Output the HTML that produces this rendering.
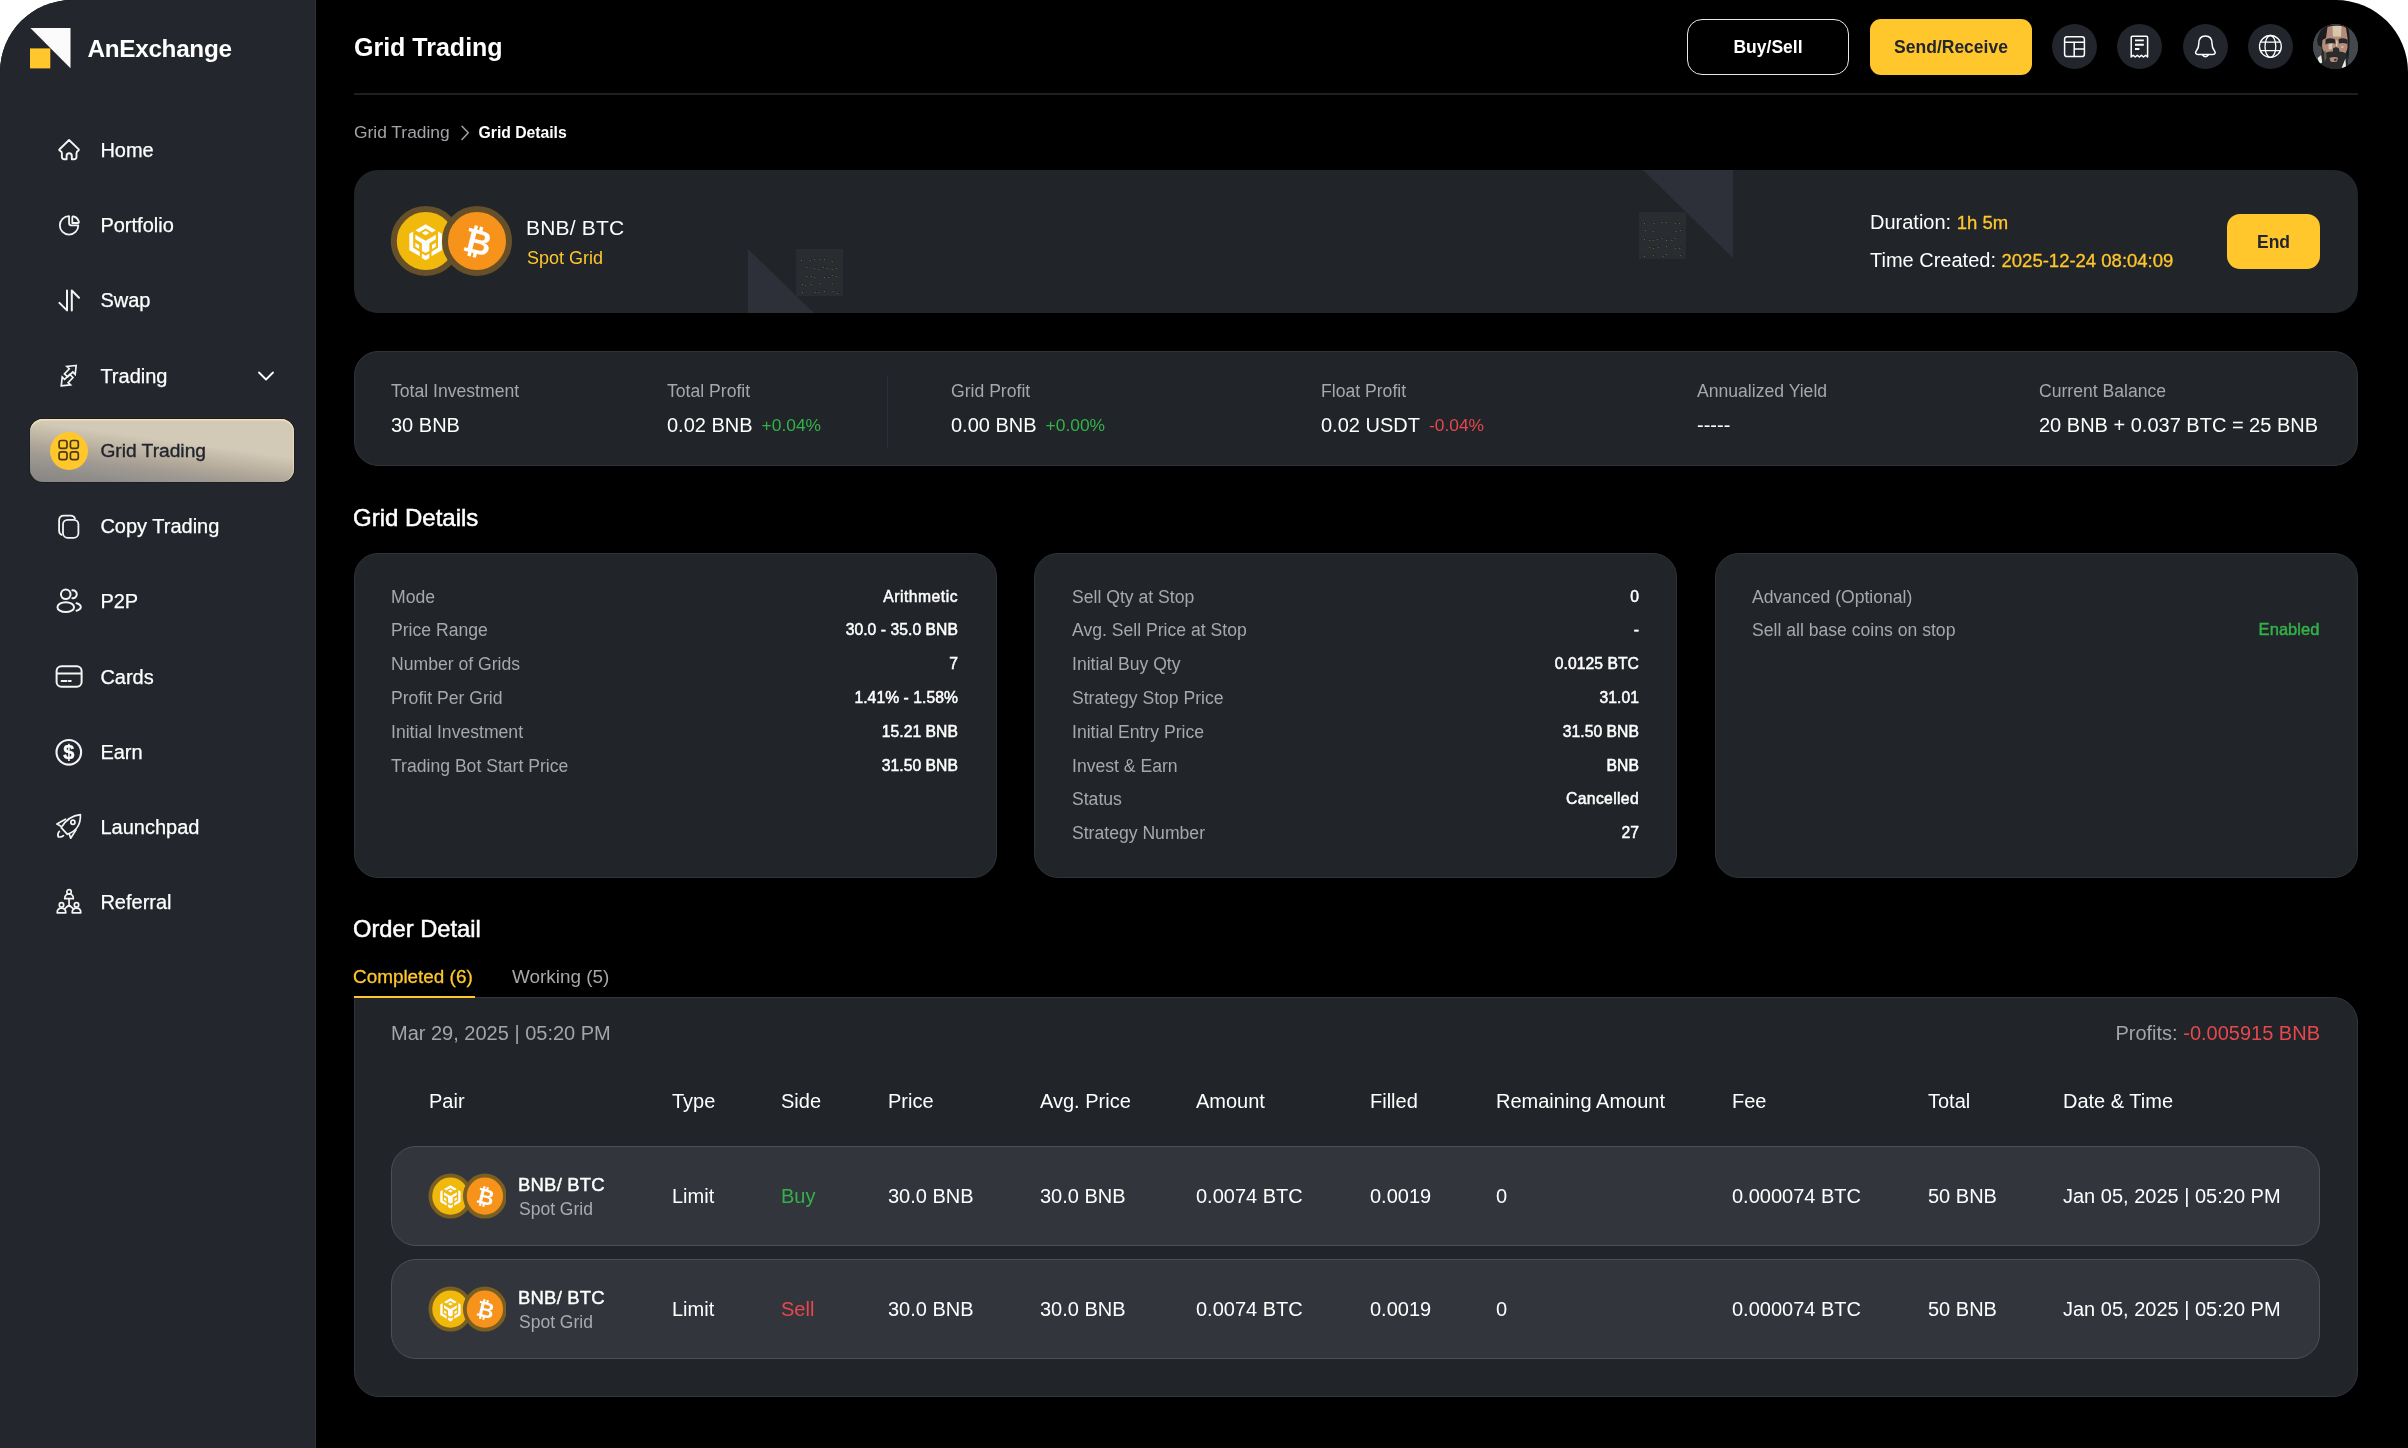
<!DOCTYPE html>
<html lang="en">
<head>
<meta charset="utf-8">
<title>Grid Trading - AnExchange</title>
<style>
*{box-sizing:border-box;margin:0;padding:0}
html,body{width:2408px;height:1448px;background:#fff;overflow:hidden}
body{font-family:"Liberation Sans",Arial,sans-serif;color:#fff;-webkit-font-smoothing:antialiased}
#app{will-change:transform;position:absolute;left:0;top:0;width:2408px;height:1448px;background:#000;border-radius:72px 72px 0 0;overflow:hidden}
.abs{position:absolute}
.t{position:absolute;white-space:nowrap;line-height:1}
/* sidebar */
#side{position:absolute;left:0;top:0;width:316px;height:1448px;background:#23262d;border-right:1px solid #2d3037}
.nav{position:absolute;left:100px;font-size:20px;line-height:24px;color:#fff;white-space:nowrap;margin-top:-0.6px;margin-left:0.4px;-webkit-text-stroke:0.25px #fff}
.ico{position:absolute;left:54px;width:30px;height:30px}
.ico svg{width:30px;height:30px;display:block;fill:none;stroke:#f4f4f4;stroke-width:1.8;stroke-linecap:round;stroke-linejoin:round}
#active{position:absolute;left:30px;top:419px;width:263.5px;height:63.2px;border-radius:13px;background:linear-gradient(188deg,#d3c9b7 0%,#d3c9b7 39%,#c7bdab 47%,#bcb2a1 55%,#b0a799 62%,#a09a93 72%,#918e8a 86%,#868482 100%);box-shadow:inset 0 1.5px 0 #f3e1b8,inset -1px 0 0 rgba(243,225,184,.6),0 0 0 1px #1c1e24}
/* header */
.btn{position:absolute;display:flex;align-items:center;justify-content:center;font-weight:700;font-size:17.5px;padding-top:1px}
.cir{position:absolute;top:24.3px;width:45px;height:45px;border-radius:50%;background:#22252c}
.cir svg{position:absolute;left:0;top:0;width:45px;height:45px;fill:none;stroke:#fff;stroke-width:1.5;stroke-linecap:round;stroke-linejoin:round}
/* cards */
.card{position:absolute;background:#212429;border-radius:24px}
.lbl{color:#a7a8aa}
.dl{font-size:17.6px;margin-top:1.5px}
.dv{font-size:15.7px;font-weight:400;letter-spacing:0.05px;margin-top:0.5px;-webkit-text-stroke:0.5px #fff}
.th{font-size:20px}
.gr{color:#33b249}
.rd{color:#e5484d}
.yl{color:#ffc72c}
.yv{font-size:18.5px;-webkit-text-stroke:0.3px #ffc72c}
</style>
</head>
<body>
<div id="app">

<!-- ============ SIDEBAR ============ -->
<div id="side">
  <svg class="abs" style="left:30px;top:28px" width="42" height="42" viewBox="0 0 42 42">
    <polygon points="0.4,0 40.5,0 40.5,40.2" fill="#fbfbfb"/>
    <rect x="0" y="20.4" width="20.3" height="20" fill="#ffc72c"/>
  </svg>
  <div class="t" style="left:87.5px;top:37px;font-size:24.3px;font-weight:700;letter-spacing:-0.3px">AnExchange</div>

  <div id="active"></div>
  <!-- Home -->
  <div class="ico" style="top:135px"><svg viewBox="0 0 30 30" style="stroke-width:1.9"><path d="M15.05 5 L5.6 14.2 Q4.8 15 5.9 15.6 Q7.9 16.6 7.9 18.2 V21.8 Q7.9 24.3 10.4 24.3 H12.6 V20.8 Q12.6 18.2 15.2 18.2 Q17.8 18.2 17.8 20.8 V24.3 H20 Q22.5 24.3 22.5 21.8 V18.2 Q22.5 16.6 24.3 15.6 Q25.3 15 24.5 14.2 Z"/></svg></div>
  <div class="nav" style="top:139px">Home</div>
  <!-- Portfolio -->
  <div class="ico" style="top:210px"><svg viewBox="0 0 30 30" style="stroke-width:1.8"><path d="M15.06 6.2 A9.2 9.2 0 1 0 24.26 15.4 H17.6 Q15.06 15.4 15.06 12.9 Z"/><path d="M18.3 13 V7.3 Q18.3 6 19.6 6.4 Q23.6 7.6 24.8 11.6 Q25.2 13 23.9 13 Z"/></svg></div>
  <div class="nav" style="top:214px">Portfolio</div>
  <!-- Swap -->
  <div class="ico" style="top:285px"><svg viewBox="0 0 30 30" style="stroke-width:2"><path d="M13 5.5 V25.4 L5.4 17.9"/><path d="M17.8 25.4 V5.5 L25 12.7"/></svg></div>
  <div class="nav" style="top:289px">Swap</div>
  <!-- Trading -->
  <div class="ico" style="top:361px"><svg viewBox="0 0 30 30" style="stroke-width:1.8;stroke-linejoin:miter"><g transform="translate(14.7,14.7) scale(0.93) translate(-14.5,-14.45)"><path d="M22.5 3.5 L12.5 4.5 L15.1 7 L9.9 12.5 L13.4 15.8 L18.9 10.5 L21.5 13 Z"/><path d="M6.5 25.4 L16.5 24.4 L13.9 21.9 L19.1 16.4 L15.6 13.1 L10.1 18.4 L7.5 15.9 Z"/></g></svg></div>
  <div class="nav" style="top:365px">Trading</div>
  <svg class="abs" style="left:255px;top:366px" width="22" height="20" viewBox="0 0 22 20"><path d="M4 6.5 L11 13.5 L18 6.5" fill="none" stroke="#fff" stroke-width="1.8" stroke-linecap="round" stroke-linejoin="round"/></svg>
  <!-- Grid Trading (active) -->
  <div class="abs" style="left:50px;top:432px;width:38px;height:38px;border-radius:50%;background:#ffc72c"></div>
  <div class="ico" style="top:436px"><svg viewBox="0 0 30 30" style="stroke:#4a3a12;stroke-width:1.7"><rect x="5.1" y="4.5" width="7.9" height="7.9" rx="2.2"/><rect x="16.4" y="4.5" width="7.9" height="7.9" rx="2.2"/><rect x="5.1" y="15.8" width="7.9" height="7.9" rx="2.2"/><rect x="16.4" y="15.8" width="7.9" height="7.9" rx="2.2"/></svg></div>
  <div class="nav" style="top:440px;color:#20242f;left:100px;font-size:19.2px;-webkit-text-stroke:0.35px #20242f">Grid Trading</div>
  <!-- Copy Trading -->
  <div class="ico" style="top:511px"><svg viewBox="0 0 30 30" style="stroke-width:1.8"><rect x="9" y="8.8" width="15.4" height="18" rx="4.6"/><path d="M21 7.6 Q20 4.7 16.8 4.7 H10 Q5.1 4.7 5.1 9.6 V19.8 Q5.1 22.8 7.6 23.8"/></svg></div>
  <div class="nav" style="top:515px">Copy Trading</div>
  <!-- P2P -->
  <div class="ico" style="top:586px"><svg viewBox="0 0 30 30" style="stroke-width:2"><circle cx="11.75" cy="8.3" r="4.8"/><ellipse cx="11.75" cy="21.2" rx="8.3" ry="4.9"/><path d="M18.4 4.35 A3.97 3.97 0 1 1 18.4 12.25"/><path d="M22.5 17.3 Q26.8 18.6 26.8 21 Q26.8 23.4 22.5 24.7"/></svg></div>
  <div class="nav" style="top:590px">P2P</div>
  <!-- Cards -->
  <div class="ico" style="top:662px"><svg viewBox="0 0 30 30" style="stroke-width:2"><rect x="2.6" y="4.2" width="25" height="20.6" rx="4.8"/><path d="M3 11.6 H27.2"/><path d="M7.6 19 H12.6 M14.8 19 H16.8"/></svg></div>
  <div class="nav" style="top:666px">Cards</div>
  <!-- Earn -->
  <div class="ico" style="top:737px"><svg viewBox="0 0 30 30" style="stroke-width:2.1"><circle cx="14.8" cy="15.3" r="12.3"/><text x="14.8" y="22.3" text-anchor="middle" font-family="Liberation Sans, Arial, sans-serif" font-weight="700" font-size="20" fill="#fff" stroke="#fff" stroke-width="0.4">$</text></svg></div>
  <div class="nav" style="top:741px">Earn</div>
  <!-- Launchpad -->
  <div class="ico" style="top:812px"><svg viewBox="0 0 30 30" style="stroke-width:1.7"><path d="M26.4 2.6 Q14.5 3.6 7.2 15.6 L13.4 22.3 Q27 17.5 26.4 2.6 Z"/><circle cx="18.9" cy="10.2" r="2.1"/><path d="M11.5 7.2 L2.9 12.1 L7 14.3"/><path d="M22 17.9 L16.7 26.2 L15.1 21.5"/><path d="M5.4 19.3 Q3 22 4.3 24.8 Q7.5 25.5 9.5 23.7"/></svg></div>
  <div class="nav" style="top:816px">Launchpad</div>
  <!-- Referral -->
  <div class="ico" style="top:887px"><svg viewBox="0 0 30 30" style="stroke-width:1.7"><circle cx="15.05" cy="4.9" r="2.2"/><path d="M10.75 11.7 Q10.75 6.999999999999999 15.05 6.999999999999999 Q19.35 6.999999999999999 19.35 11.7 Z"/><circle cx="7.5" cy="17.9" r="2.2"/><path d="M3.2 25.8 Q3.2 21.1 7.5 21.1 Q11.8 21.1 11.8 25.8 Z"/><circle cx="22.5" cy="17.9" r="2.2"/><path d="M18.2 25.8 Q18.2 21.1 22.5 21.1 Q26.8 21.1 26.8 25.8 Z"/><path d="M15.05 11.9 V18 M15.05 18 L10.9 21.7 M15.05 18 L19.2 21.7"/></svg></div>
  <div class="nav" style="top:891px">Referral</div>
</div>

<!-- ============ HEADER ============ -->
<div class="t" style="left:354px;top:34.7px;font-size:25px;font-weight:700">Grid Trading</div>
<div class="btn" style="left:1687px;top:19px;width:162px;height:56px;border:1.5px solid #e8e8e8;border-radius:15px;color:#fff">Buy/Sell</div>
<div class="btn" style="left:1870px;top:19px;width:162px;height:56px;background:#ffc72c;border-radius:11px;color:#23262e">Send/Receive</div>
<div class="cir" style="left:2052px"><svg viewBox="0 0 45 45"><rect x="12.6" y="12.7" width="19.8" height="19.8" rx="2.6"/><path d="M12.6 18.2 H32.4 M22.2 18.2 V32.5 M22.2 25 H32.4"/></svg></div>
<div class="cir" style="left:2117.3px"><svg viewBox="0 0 45 45"><path d="M14.2 33 V13.4 Q14.2 12.2 15.4 12.2 H29.4 Q30.6 12.2 30.6 13.4 V33 L28.6 31.2 L26.5 33 L24.4 31.2 L22.4 33 L20.3 31.2 L18.2 33 L16.2 31.2 Z"/><path d="M18 16.4 H26.8 M18 20.8 H26.8 M18 25 H22.4" stroke-width="1.9" stroke-linecap="butt"/></svg></div>
<div class="cir" style="left:2182.5px"><svg viewBox="0 0 45 45"><path d="M22.4 12 C17.6 12 15.8 15.6 15.8 19.6 C15.8 23.4 15 25 13.4 26.8 C11.8 28.6 12.6 30.4 15 30.4 H29.8 C32.2 30.4 33 28.6 31.4 26.8 C29.8 25 29 23.4 29 19.6 C29 15.6 27.2 12 22.4 12 Z"/><path d="M19.4 30.8 Q22.4 34.6 25.4 30.8"/></svg></div>
<div class="cir" style="left:2248px"><svg viewBox="0 0 45 45" style="stroke-width:1.3"><circle cx="22.4" cy="22.4" r="10.9"/><ellipse cx="22.4" cy="22.4" rx="5.4" ry="10.9"/><path d="M12.6 18.2 H32.2 M12.6 26.6 H32.2"/></svg></div>
<div class="cir" style="left:2313px;background:#45484e;overflow:hidden">
  <svg viewBox="0 0 45 45" style="stroke:none">
    <rect width="45" height="45" fill="#45484e"/>
    <path d="M4 16 Q6 6 13 1 L34 0.5 Q37 6 36.5 20 L35.5 36 L33 30 L9 30 L8.5 23 L5 21 Z" fill="#1c1d20"/>
    <path d="M3 38 L9 31 L34 28 L35.5 45 L3 45 Z" fill="#232427"/>
    <path d="M14.5 3 Q17 1.4 24 1.4 Q31 1.4 33 4 L34.5 14 L34.5 24 Q33 30 30 31 L14 31 Q9.5 28 9 22 L9.5 16 L13 14 Z" fill="#b48b78"/>
    <path d="M19.5 2 H28.5 L28 12.5 H20 Z" fill="#d2c9b9"/>
    <circle cx="21.7" cy="6.2" r=".5" fill="#f1c13c"/><circle cx="23.8" cy="7.2" r=".5" fill="#f1c13c"/><circle cx="25.8" cy="5.4" r=".5" fill="#f1c13c"/><circle cx="21.7" cy="8.3" r=".5" fill="#f1c13c"/><circle cx="23.8" cy="9.2" r=".5" fill="#f1c13c"/><circle cx="25.8" cy="8.3" r=".5" fill="#f1c13c"/><circle cx="21.7" cy="10.3" r=".5" fill="#f1c13c"/><circle cx="23.8" cy="11.2" r=".5" fill="#f1c13c"/><circle cx="25.8" cy="10.3" r=".5" fill="#f1c13c"/><circle cx="25.8" cy="12.3" r=".5" fill="#f1c13c"/>
    <path d="M12.5 15.5 Q17 13.2 22 15.2 L22.5 19.8 Q17 18 12.5 20.5 Z" fill="#26272a"/>
    <path d="M25.5 15.2 Q30 13.2 34.5 15.8 L34.5 20 Q30 18.4 26 19.4 Z" fill="#26272a"/>
    <path d="M15.5 20.5 L19.5 19.6 L19 25 L15.8 25.5 Z" fill="#d2c9b9"/>
    <path d="M28.5 21.5 L31 23 L28.5 24.5 Z" fill="#d2c9b9"/>
    <path d="M23 16.5 L24.6 16.5 L24.4 22.5 L23 22.5 Z" fill="#d2c9b9"/>
    <path d="M20 24.5 L23 23 L26 24.5 L26.5 28.5 L20 28.5 Z" fill="#2b2c2f"/>
    <path d="M8 30 Q9.5 27 13 28.5 Q17 27 21 27.5 L25 27.5 Q29 27 33 29.5 Q33.5 40 28 45 L13 45 Q8 39 8 30 Z" fill="#2a2b2d"/>
    <path d="M16.5 34 Q21 32.2 25 33.8 L24 37.6 Q20.5 38.6 17.5 37.4 Z" fill="#b48b78"/>
    <path d="M21 35 Q22.5 34.4 24 35.2 L23 36.6 Q22 36.8 21.4 36.4 Z" fill="#2b2c2f"/>
    <path d="M4.6 34 L8.2 31 L9.2 38.5 L6.4 40.5 Z" fill="#ececec"/>
    <path d="M28.4 44.5 L32.4 34.5 L33 42.5 L31 45 Z" fill="#ececec"/>
    <path d="M11 27 L13 26.5 L13.5 34 L11.5 38 Z" fill="#7c6a4a" opacity=".7"/>
  </svg>
</div>
<div class="abs" style="left:354px;top:93.2px;width:2004px;height:1.6px;background:#1d1f25"></div>

<!-- breadcrumb -->
<div class="t" style="left:354px;top:124px;font-size:17.4px;color:#a3a4a8">Grid Trading</div>
<svg class="abs" style="left:458px;top:122px" width="14" height="22" viewBox="0 0 14 22"><path d="M4 4.2 L10.3 10.8 L4 17.4" fill="none" stroke="#a3a4a8" stroke-width="1.5" stroke-linecap="round" stroke-linejoin="round"/></svg>
<div class="t" style="left:478.6px;top:124.8px;font-size:15.8px;font-weight:700;color:#fff;letter-spacing:-0.05px">Grid Details</div>

<!-- ============ HERO CARD ============ -->
<div class="card" style="left:354px;top:170px;width:2004px;height:143px;overflow:hidden">
  <svg class="abs" style="left:0;top:0" width="2004" height="143" viewBox="0 0 2004 143">
    <polygon points="394,79 394,143 460,143" fill="#2d3038"/>
    <rect x="442" y="79" width="47" height="47" fill="#292c31"/><rect x="447.0" y="90" width="1" height="1" fill="#80591b"/><rect x="448.0" y="89" width="1" height="1" fill="#1b1d21"/><rect x="455.8" y="90" width="1" height="1" fill="#80591b"/><rect x="456.8" y="89" width="1" height="1" fill="#1b1d21"/><rect x="460.2" y="89" width="1" height="1" fill="#80591b"/><rect x="461.2" y="88" width="1" height="1" fill="#1b1d21"/><rect x="465.6" y="89" width="1" height="1" fill="#80591b"/><rect x="466.6" y="88" width="1" height="1" fill="#1b1d21"/><rect x="470.0" y="89" width="1" height="1" fill="#80591b"/><rect x="471.0" y="88" width="1" height="1" fill="#1b1d21"/><rect x="477.8" y="91" width="1" height="1" fill="#80591b"/><rect x="478.8" y="90" width="1" height="1" fill="#1b1d21"/><rect x="452.4" y="97" width="1" height="1" fill="#80591b"/><rect x="453.4" y="96" width="1" height="1" fill="#1b1d21"/><rect x="460.2" y="98" width="1" height="1" fill="#80591b"/><rect x="461.2" y="97" width="1" height="1" fill="#1b1d21"/><rect x="464.6" y="99" width="1" height="1" fill="#80591b"/><rect x="465.6" y="98" width="1" height="1" fill="#1b1d21"/><rect x="469.0" y="97" width="1" height="1" fill="#80591b"/><rect x="470.0" y="96" width="1" height="1" fill="#1b1d21"/><rect x="473.4" y="98" width="1" height="1" fill="#80591b"/><rect x="474.4" y="97" width="1" height="1" fill="#1b1d21"/><rect x="477.8" y="99" width="1" height="1" fill="#80591b"/><rect x="478.8" y="98" width="1" height="1" fill="#1b1d21"/><rect x="482.2" y="98" width="1" height="1" fill="#80591b"/><rect x="483.2" y="97" width="1" height="1" fill="#1b1d21"/><rect x="452.4" y="106" width="1" height="1" fill="#80591b"/><rect x="453.4" y="105" width="1" height="1" fill="#1b1d21"/><rect x="456.8" y="106" width="1" height="1" fill="#80591b"/><rect x="457.8" y="105" width="1" height="1" fill="#1b1d21"/><rect x="460.2" y="107" width="1" height="1" fill="#80591b"/><rect x="461.2" y="106" width="1" height="1" fill="#1b1d21"/><rect x="470.0" y="107" width="1" height="1" fill="#80591b"/><rect x="471.0" y="106" width="1" height="1" fill="#1b1d21"/><rect x="474.4" y="107" width="1" height="1" fill="#80591b"/><rect x="475.4" y="106" width="1" height="1" fill="#1b1d21"/><rect x="477.8" y="105" width="1" height="1" fill="#80591b"/><rect x="478.8" y="104" width="1" height="1" fill="#1b1d21"/><rect x="482.2" y="106" width="1" height="1" fill="#80591b"/><rect x="483.2" y="105" width="1" height="1" fill="#1b1d21"/><rect x="448.0" y="114" width="1" height="1" fill="#80591b"/><rect x="449.0" y="113" width="1" height="1" fill="#1b1d21"/><rect x="451.4" y="115" width="1" height="1" fill="#80591b"/><rect x="452.4" y="114" width="1" height="1" fill="#1b1d21"/><rect x="456.8" y="114" width="1" height="1" fill="#80591b"/><rect x="457.8" y="113" width="1" height="1" fill="#1b1d21"/><rect x="465.6" y="113" width="1" height="1" fill="#80591b"/><rect x="466.6" y="112" width="1" height="1" fill="#1b1d21"/><rect x="477.8" y="113" width="1" height="1" fill="#80591b"/><rect x="478.8" y="112" width="1" height="1" fill="#1b1d21"/><rect x="448.0" y="122" width="1" height="1" fill="#80591b"/><rect x="449.0" y="121" width="1" height="1" fill="#1b1d21"/><rect x="461.2" y="122" width="1" height="1" fill="#80591b"/><rect x="462.2" y="121" width="1" height="1" fill="#1b1d21"/><rect x="464.6" y="122" width="1" height="1" fill="#80591b"/><rect x="465.6" y="121" width="1" height="1" fill="#1b1d21"/><rect x="470.0" y="121" width="1" height="1" fill="#80591b"/><rect x="471.0" y="120" width="1" height="1" fill="#1b1d21"/><rect x="478.8" y="121" width="1" height="1" fill="#80591b"/><rect x="479.8" y="120" width="1" height="1" fill="#1b1d21"/><rect x="483.2" y="123" width="1" height="1" fill="#80591b"/><rect x="484.2" y="122" width="1" height="1" fill="#1b1d21"/>
    <polygon points="1289,0 1379,0 1379,88" fill="#2d3038"/>
    <rect x="1285" y="42" width="47" height="47" fill="#292c31"/><rect x="1290.0" y="53" width="1" height="1" fill="#80591b"/><rect x="1291.0" y="52" width="1" height="1" fill="#1b1d21"/><rect x="1299.8" y="53" width="1" height="1" fill="#80591b"/><rect x="1300.8" y="52" width="1" height="1" fill="#1b1d21"/><rect x="1307.6" y="52" width="1" height="1" fill="#80591b"/><rect x="1308.6" y="51" width="1" height="1" fill="#1b1d21"/><rect x="1312.0" y="52" width="1" height="1" fill="#80591b"/><rect x="1313.0" y="51" width="1" height="1" fill="#1b1d21"/><rect x="1320.8" y="53" width="1" height="1" fill="#80591b"/><rect x="1321.8" y="52" width="1" height="1" fill="#1b1d21"/><rect x="1325.2" y="53" width="1" height="1" fill="#80591b"/><rect x="1326.2" y="52" width="1" height="1" fill="#1b1d21"/><rect x="1291.0" y="60" width="1" height="1" fill="#80591b"/><rect x="1292.0" y="59" width="1" height="1" fill="#1b1d21"/><rect x="1298.8" y="61" width="1" height="1" fill="#80591b"/><rect x="1299.8" y="60" width="1" height="1" fill="#1b1d21"/><rect x="1321.8" y="61" width="1" height="1" fill="#80591b"/><rect x="1322.8" y="60" width="1" height="1" fill="#1b1d21"/><rect x="1326.2" y="60" width="1" height="1" fill="#80591b"/><rect x="1327.2" y="59" width="1" height="1" fill="#1b1d21"/><rect x="1290.0" y="69" width="1" height="1" fill="#80591b"/><rect x="1291.0" y="68" width="1" height="1" fill="#1b1d21"/><rect x="1295.4" y="70" width="1" height="1" fill="#80591b"/><rect x="1296.4" y="69" width="1" height="1" fill="#1b1d21"/><rect x="1298.8" y="70" width="1" height="1" fill="#80591b"/><rect x="1299.8" y="69" width="1" height="1" fill="#1b1d21"/><rect x="1303.2" y="69" width="1" height="1" fill="#80591b"/><rect x="1304.2" y="68" width="1" height="1" fill="#1b1d21"/><rect x="1307.6" y="68" width="1" height="1" fill="#80591b"/><rect x="1308.6" y="67" width="1" height="1" fill="#1b1d21"/><rect x="1312.0" y="70" width="1" height="1" fill="#80591b"/><rect x="1313.0" y="69" width="1" height="1" fill="#1b1d21"/><rect x="1317.4" y="70" width="1" height="1" fill="#80591b"/><rect x="1318.4" y="69" width="1" height="1" fill="#1b1d21"/><rect x="1320.8" y="68" width="1" height="1" fill="#80591b"/><rect x="1321.8" y="67" width="1" height="1" fill="#1b1d21"/><rect x="1295.4" y="77" width="1" height="1" fill="#80591b"/><rect x="1296.4" y="76" width="1" height="1" fill="#1b1d21"/><rect x="1298.8" y="78" width="1" height="1" fill="#80591b"/><rect x="1299.8" y="77" width="1" height="1" fill="#1b1d21"/><rect x="1304.2" y="77" width="1" height="1" fill="#80591b"/><rect x="1305.2" y="76" width="1" height="1" fill="#1b1d21"/><rect x="1312.0" y="76" width="1" height="1" fill="#80591b"/><rect x="1313.0" y="75" width="1" height="1" fill="#1b1d21"/><rect x="1320.8" y="78" width="1" height="1" fill="#80591b"/><rect x="1321.8" y="77" width="1" height="1" fill="#1b1d21"/><rect x="1325.2" y="78" width="1" height="1" fill="#80591b"/><rect x="1326.2" y="77" width="1" height="1" fill="#1b1d21"/><rect x="1290.0" y="86" width="1" height="1" fill="#80591b"/><rect x="1291.0" y="85" width="1" height="1" fill="#1b1d21"/><rect x="1298.8" y="85" width="1" height="1" fill="#80591b"/><rect x="1299.8" y="84" width="1" height="1" fill="#1b1d21"/><rect x="1308.6" y="86" width="1" height="1" fill="#80591b"/><rect x="1309.6" y="85" width="1" height="1" fill="#1b1d21"/><rect x="1312.0" y="84" width="1" height="1" fill="#80591b"/><rect x="1313.0" y="83" width="1" height="1" fill="#1b1d21"/><rect x="1326.2" y="85" width="1" height="1" fill="#80591b"/><rect x="1327.2" y="84" width="1" height="1" fill="#1b1d21"/>
  </svg>
</div>
<!-- coins big -->
<svg class="abs" style="left:388px;top:202px" width="128" height="78" viewBox="0 0 128 78">
  <circle cx="37.8" cy="39" r="32" fill="#f0b90b" stroke="#65502a" stroke-width="6"/>
  <g transform="translate(37.6,38) scale(1.07)" fill="#fcfcfc">
    <path d="M-9.6 -9.2 L0 -14.8 L9.6 -9.2 L6.1 -7.1 L0 -10.7 L-6.1 -7.1 Z"/>
    <path d="M0 -8.6 L3.6 -6.5 L0 -4.4 L-3.6 -6.5 Z"/>
    <path d="M-15.2 -5.9 L-11.6 -8 L-11.6 7.3 L-5.5 10.9 L-5.5 15.1 L-15.2 9.5 Z"/>
    <path d="M15.2 -5.9 L11.6 -8 L11.6 7.3 L5.5 10.9 L5.5 15.1 L15.2 9.5 Z"/>
    <path d="M-9.6 -4.8 L0 0.8 L9.6 -4.8 L9.6 -0.6 L3.5 3 L3.5 10.2 L0 12.2 L-3.5 10.2 L-3.5 3 L-9.6 -0.6 Z"/>
    <path d="M-9.6 2.6 L-6 4.7 L-6 8.3 L-9.6 6.2 Z M9.6 2.6 L6 4.7 L6 8.3 L9.6 6.2 Z"/>
    <path d="M-3.5 12.6 L0 14.7 L3.5 12.6 L3.5 16.8 L0 18.9 L-3.5 16.8 Z"/>
  </g>
  <circle cx="89" cy="39" r="32" fill="#f7931a" stroke="#65502a" stroke-width="6"/>
  <text x="90" y="51.5" text-anchor="middle" font-family="Liberation Sans, Arial, sans-serif" font-weight="700" font-size="34" fill="#fcfcfc" transform="rotate(14 89 39)">₿</text>
</svg>
<div class="t" style="left:526px;top:217px;font-size:21px;letter-spacing:0.2px">BNB/ BTC</div>
<div class="t yl" style="left:527px;top:249px;font-size:18px">Spot Grid</div>
<div class="t" style="left:1870px;top:211.8px;font-size:20px">Duration: <span class="yl yv">1h 5m</span></div>
<div class="t" style="left:1870px;top:249.8px;font-size:20px">Time Created: <span class="yl yv">2025-12-24 08:04:09</span></div>
<div class="btn" style="left:2227px;top:214px;width:93px;height:55px;background:#ffc72c;border-radius:13px;color:#23262e;font-size:17.5px">End</div>

<!-- ============ STATS CARD ============ -->
<div class="card" style="left:354px;top:351px;width:2004px;height:115px;border:1px solid #2f3239"></div>
<div class="abs" style="left:887px;top:376px;width:1px;height:72px;background:#2c2f36"></div>
<div class="t lbl" style="left:391px;top:383px;font-size:17.6px">Total Investment</div>
<div class="t" style="left:391px;top:415px;font-size:20px">30 BNB</div>
<div class="t lbl" style="left:667px;top:383px;font-size:17.6px">Total Profit</div>
<div class="t" style="left:667px;top:415px;font-size:20px">0.02 BNB<span class="gr" style="font-size:17.4px;margin-left:9px;position:relative;top:-1px">+0.04%</span></div>
<div class="t lbl" style="left:951px;top:383px;font-size:17.6px">Grid Profit</div>
<div class="t" style="left:951px;top:415px;font-size:20px">0.00 BNB<span class="gr" style="font-size:17.4px;margin-left:9px;position:relative;top:-1px">+0.00%</span></div>
<div class="t lbl" style="left:1321px;top:383px;font-size:17.6px">Float Profit</div>
<div class="t" style="left:1321px;top:415px;font-size:20px">0.02 USDT<span class="rd" style="font-size:17.4px;margin-left:9px;position:relative;top:-1px">-0.04%</span></div>
<div class="t lbl" style="left:1697px;top:383px;font-size:17.6px">Annualized Yield</div>
<div class="t" style="left:1697px;top:415px;font-size:20px">-----</div>
<div class="t lbl" style="left:2039px;top:383px;font-size:17.6px">Current Balance</div>
<div class="t" style="left:2039px;top:415px;font-size:20px">20 BNB + 0.037 BTC = 25 BNB</div>

<!-- ============ GRID DETAILS ============ -->
<div class="t" style="left:353px;top:506px;font-size:24px;-webkit-text-stroke:0.5px #fff">Grid Details</div>
<div class="card" style="left:354px;top:552.5px;width:643px;height:325.5px;border:1px solid #2f3239"></div>
<div class="card" style="left:1034px;top:552.5px;width:643px;height:325.5px;border:1px solid #2f3239"></div>
<div class="card" style="left:1715px;top:552.5px;width:643px;height:325.5px;border:1px solid #2f3239"></div>
<div class="t lbl dl" style="left:391px;top:587.0px">Mode</div>
<div class="t dv" style="right:1450px;top:588.0px;letter-spacing:0.5px">Arithmetic</div>
<div class="t lbl dl" style="left:391px;top:620.83px">Price Range</div>
<div class="t dv" style="right:1450px;top:621.83px">30.0 - 35.0 BNB</div>
<div class="t lbl dl" style="left:391px;top:654.66px">Number of Grids</div>
<div class="t dv" style="right:1450px;top:655.66px">7</div>
<div class="t lbl dl" style="left:391px;top:688.49px">Profit Per Grid</div>
<div class="t dv" style="right:1450px;top:689.49px">1.41% - 1.58%</div>
<div class="t lbl dl" style="left:391px;top:722.32px">Initial Investment</div>
<div class="t dv" style="right:1450px;top:723.32px">15.21 BNB</div>
<div class="t lbl dl" style="left:391px;top:756.15px">Trading Bot Start Price</div>
<div class="t dv" style="right:1450px;top:757.15px">31.50 BNB</div>
<div class="t lbl dl" style="left:1072px;top:587.0px">Sell Qty at Stop</div>
<div class="t dv" style="right:769px;top:588.0px">0</div>
<div class="t lbl dl" style="left:1072px;top:620.83px">Avg. Sell Price at Stop</div>
<div class="t dv" style="right:769px;top:621.83px">-</div>
<div class="t lbl dl" style="left:1072px;top:654.66px">Initial Buy Qty</div>
<div class="t dv" style="right:769px;top:655.66px">0.0125 BTC</div>
<div class="t lbl dl" style="left:1072px;top:688.49px">Strategy Stop Price</div>
<div class="t dv" style="right:769px;top:689.49px">31.01</div>
<div class="t lbl dl" style="left:1072px;top:722.32px">Initial Entry Price</div>
<div class="t dv" style="right:769px;top:723.32px">31.50 BNB</div>
<div class="t lbl dl" style="left:1072px;top:756.15px">Invest &amp; Earn</div>
<div class="t dv" style="right:769px;top:757.15px">BNB</div>
<div class="t lbl dl" style="left:1072px;top:789.98px">Status</div>
<div class="t dv" style="right:769px;top:790.98px;letter-spacing:0.35px">Cancelled</div>
<div class="t lbl dl" style="left:1072px;top:823.81px">Strategy Number</div>
<div class="t dv" style="right:769px;top:824.81px">27</div>
<div class="t lbl dl" style="left:1752px;top:587.0px">Advanced (Optional)</div>
<div class="t lbl dl" style="left:1752px;top:620.83px">Sell all base coins on stop</div>
<div class="t dv" style="right:88.5px;top:620.4px;color:#33b249;font-weight:400;-webkit-text-stroke:0.45px #33b249;font-size:16.5px">Enabled</div>
<!-- ============ ORDER DETAIL ============ -->
<div class="t" style="left:353px;top:917.5px;font-size:23.7px;-webkit-text-stroke:0.5px #fff">Order Detail</div>
<div class="t yl" style="left:353px;top:968px;font-size:18.9px;-webkit-text-stroke:0.3px #ffc72c">Completed (6)</div>
<div class="t" style="left:512px;top:968px;font-size:18.9px;color:#a6a7a9">Working (5)</div>
<div class="card" style="left:354px;top:997px;width:2004px;height:400px;border-radius:0 25px 25px 25px;border:1px solid #32353c"></div>
<div class="abs" style="left:353.5px;top:995.5px;width:121px;height:2px;background:#ffc72c"></div>
<div class="t" style="left:391px;top:1023.3px;font-size:20px;color:#a4a5a7">Mar 29, 2025 | 05:20 PM</div>
<div class="t" style="right:88px;top:1023.3px;font-size:20px;color:#a4a5a7">Profits: <span class="rd">-0.005915 BNB</span></div>
<div class="t th" style="left:429px;top:1091px">Pair</div>
<div class="t th" style="left:672px;top:1091px">Type</div>
<div class="t th" style="left:781px;top:1091px">Side</div>
<div class="t th" style="left:888px;top:1091px">Price</div>
<div class="t th" style="left:1040px;top:1091px">Avg. Price</div>
<div class="t th" style="left:1196px;top:1091px">Amount</div>
<div class="t th" style="left:1370px;top:1091px">Filled</div>
<div class="t th" style="left:1496px;top:1091px">Remaining Amount</div>
<div class="t th" style="left:1732px;top:1091px">Fee</div>
<div class="t th" style="left:1928px;top:1091px">Total</div>
<div class="t th" style="left:2063px;top:1091px">Date &amp; Time</div>
<div class="abs" style="left:391px;top:1145.5px;width:1929px;height:100.5px;border-radius:25px;background:#33353d;border:1px solid #4d4f56"></div>
<svg class="abs" style="left:425.8px;top:1170.9px" width="80.2" height="50.2" viewBox="0 0 128 78" preserveAspectRatio="none">
  <circle cx="39" cy="39" r="32" fill="#f0b90b" stroke="#7a5f22" stroke-width="6"/>
  <g transform="translate(39,38) scale(1.07)" fill="#fcfcfc">
    <path d="M-9.6 -9.2 L0 -14.8 L9.6 -9.2 L6.1 -7.1 L0 -10.7 L-6.1 -7.1 Z"/>
    <path d="M0 -8.6 L3.6 -6.5 L0 -4.4 L-3.6 -6.5 Z"/>
    <path d="M-15.2 -5.9 L-11.6 -8 L-11.6 7.3 L-5.5 10.9 L-5.5 15.1 L-15.2 9.5 Z"/>
    <path d="M15.2 -5.9 L11.6 -8 L11.6 7.3 L5.5 10.9 L5.5 15.1 L15.2 9.5 Z"/>
    <path d="M-9.6 -4.8 L0 0.8 L9.6 -4.8 L9.6 -0.6 L3.5 3 L3.5 10.2 L0 12.2 L-3.5 10.2 L-3.5 3 L-9.6 -0.6 Z"/>
    <path d="M-9.6 2.6 L-6 4.7 L-6 8.3 L-9.6 6.2 Z M9.6 2.6 L6 4.7 L6 8.3 L9.6 6.2 Z"/>
    <path d="M-3.5 12.6 L0 14.7 L3.5 12.6 L3.5 16.8 L0 18.9 L-3.5 16.8 Z"/>
  </g>
  <circle cx="94" cy="39" r="32" fill="#f7931a" stroke="#7a5f22" stroke-width="6"/>
  <text x="95" y="51.5" text-anchor="middle" font-family="Liberation Sans, Arial, sans-serif" font-weight="700" font-size="34" fill="#fcfcfc" transform="rotate(14 94 39)">₿</text>
</svg>
<div class="t" style="left:518px;top:1176px;font-size:18.5px;-webkit-text-stroke:0.4px #fff;letter-spacing:0.2px">BNB/ BTC</div>
<div class="t" style="left:519px;top:1201px;font-size:17.5px;color:#a9abb0">Spot Grid</div>
<div class="t th " style="left:672px;top:1186px">Limit</div>
<div class="t th gr" style="left:781px;top:1186px">Buy</div>
<div class="t th " style="left:888px;top:1186px">30.0 BNB</div>
<div class="t th " style="left:1040px;top:1186px">30.0 BNB</div>
<div class="t th " style="left:1196px;top:1186px">0.0074 BTC</div>
<div class="t th " style="left:1370px;top:1186px">0.0019</div>
<div class="t th " style="left:1496px;top:1186px">0</div>
<div class="t th " style="left:1732px;top:1186px">0.000074 BTC</div>
<div class="t th " style="left:1928px;top:1186px">50 BNB</div>
<div class="t th " style="left:2063px;top:1186px">Jan 05, 2025 | 05:20 PM</div>
<div class="abs" style="left:391px;top:1258.5px;width:1929px;height:100.5px;border-radius:25px;background:#33353d;border:1px solid #4d4f56"></div>
<svg class="abs" style="left:425.8px;top:1283.9px" width="80.2" height="50.2" viewBox="0 0 128 78" preserveAspectRatio="none">
  <circle cx="39" cy="39" r="32" fill="#f0b90b" stroke="#7a5f22" stroke-width="6"/>
  <g transform="translate(39,38) scale(1.07)" fill="#fcfcfc">
    <path d="M-9.6 -9.2 L0 -14.8 L9.6 -9.2 L6.1 -7.1 L0 -10.7 L-6.1 -7.1 Z"/>
    <path d="M0 -8.6 L3.6 -6.5 L0 -4.4 L-3.6 -6.5 Z"/>
    <path d="M-15.2 -5.9 L-11.6 -8 L-11.6 7.3 L-5.5 10.9 L-5.5 15.1 L-15.2 9.5 Z"/>
    <path d="M15.2 -5.9 L11.6 -8 L11.6 7.3 L5.5 10.9 L5.5 15.1 L15.2 9.5 Z"/>
    <path d="M-9.6 -4.8 L0 0.8 L9.6 -4.8 L9.6 -0.6 L3.5 3 L3.5 10.2 L0 12.2 L-3.5 10.2 L-3.5 3 L-9.6 -0.6 Z"/>
    <path d="M-9.6 2.6 L-6 4.7 L-6 8.3 L-9.6 6.2 Z M9.6 2.6 L6 4.7 L6 8.3 L9.6 6.2 Z"/>
    <path d="M-3.5 12.6 L0 14.7 L3.5 12.6 L3.5 16.8 L0 18.9 L-3.5 16.8 Z"/>
  </g>
  <circle cx="94" cy="39" r="32" fill="#f7931a" stroke="#7a5f22" stroke-width="6"/>
  <text x="95" y="51.5" text-anchor="middle" font-family="Liberation Sans, Arial, sans-serif" font-weight="700" font-size="34" fill="#fcfcfc" transform="rotate(14 94 39)">₿</text>
</svg>
<div class="t" style="left:518px;top:1289px;font-size:18.5px;-webkit-text-stroke:0.4px #fff;letter-spacing:0.2px">BNB/ BTC</div>
<div class="t" style="left:519px;top:1314px;font-size:17.5px;color:#a9abb0">Spot Grid</div>
<div class="t th " style="left:672px;top:1299px">Limit</div>
<div class="t th rd" style="left:781px;top:1299px">Sell</div>
<div class="t th " style="left:888px;top:1299px">30.0 BNB</div>
<div class="t th " style="left:1040px;top:1299px">30.0 BNB</div>
<div class="t th " style="left:1196px;top:1299px">0.0074 BTC</div>
<div class="t th " style="left:1370px;top:1299px">0.0019</div>
<div class="t th " style="left:1496px;top:1299px">0</div>
<div class="t th " style="left:1732px;top:1299px">0.000074 BTC</div>
<div class="t th " style="left:1928px;top:1299px">50 BNB</div>
<div class="t th " style="left:2063px;top:1299px">Jan 05, 2025 | 05:20 PM</div>

</div>
</body>
</html>
